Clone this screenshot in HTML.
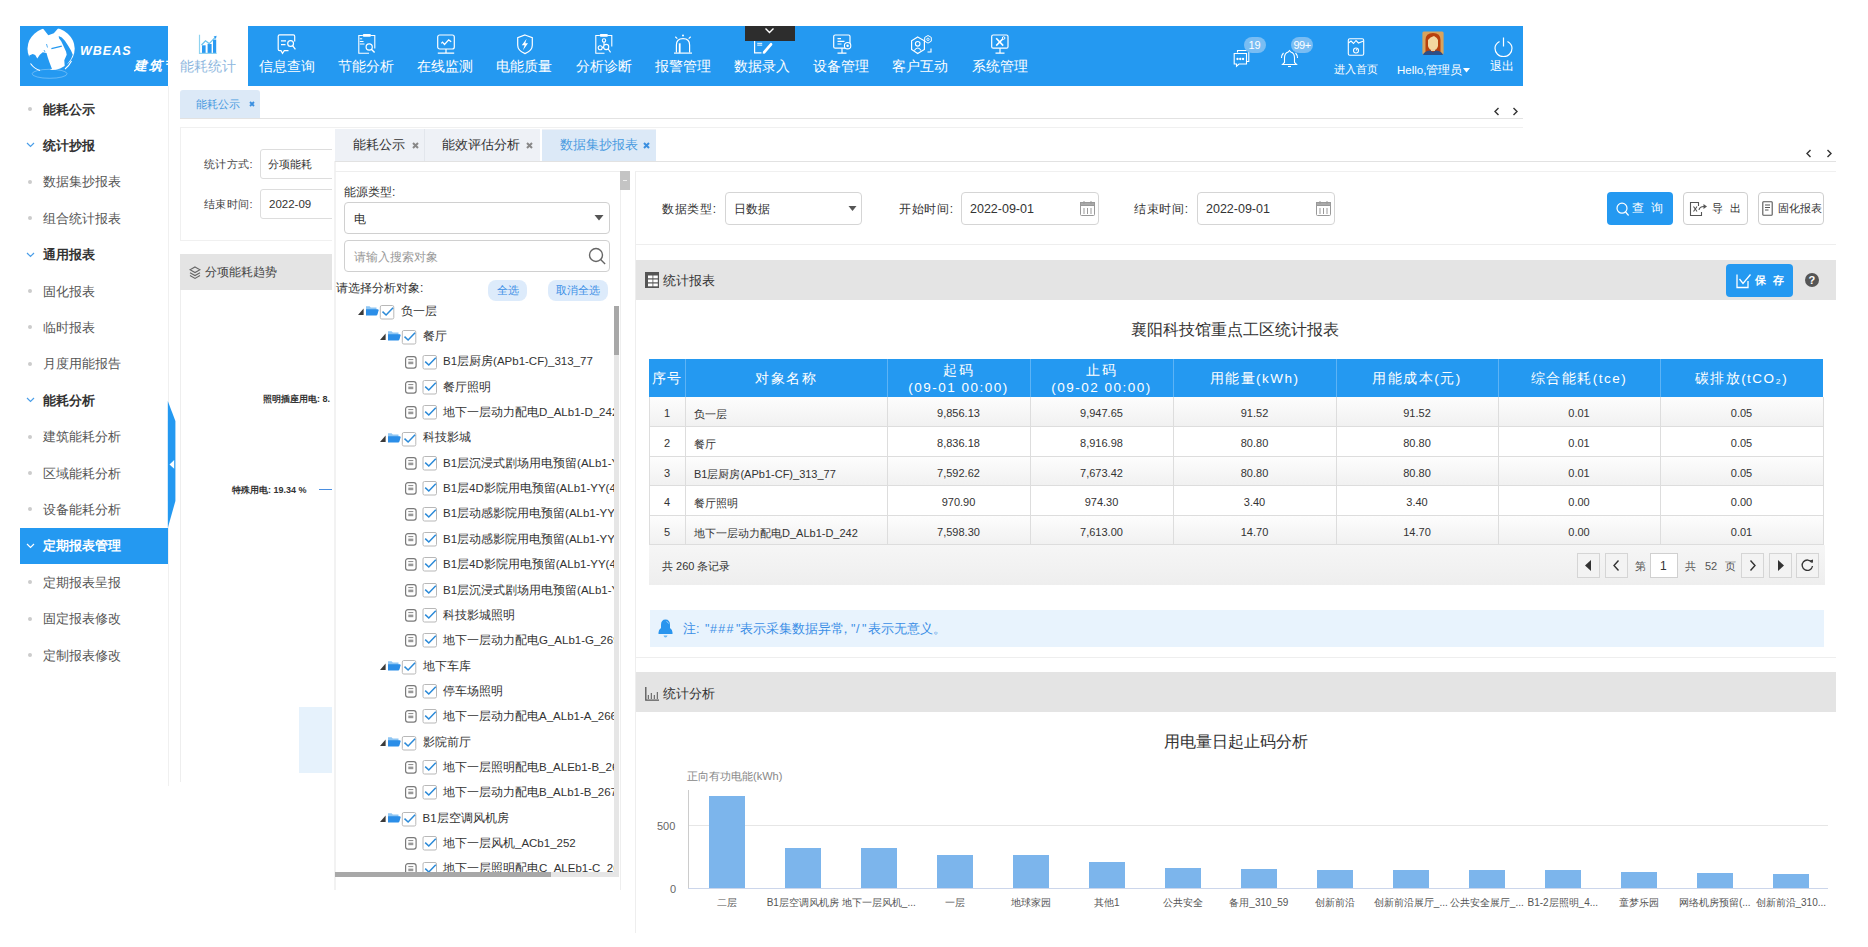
<!DOCTYPE html><html><head><meta charset="utf-8"><style>
*{margin:0;padding:0;box-sizing:border-box}
html,body{width:1868px;height:947px;overflow:hidden;background:#fff;font-family:"Liberation Sans",sans-serif;color:#333}
.ab{position:absolute}
.t{position:absolute;white-space:nowrap;line-height:1}
</style></head><body>

<div class="ab" style="left:20px;top:26px;width:1503px;height:60px;background:#2499f1"></div>
<div class="ab" style="left:168px;top:26px;width:80px;height:60px;background:#fff"></div>
<svg class="ab" style="left:22px;top:26px" width="60" height="58" viewBox="0 0 60 58">
<ellipse cx="29.1" cy="22.75" rx="23.6" ry="21.25" fill="#fff"/>
<path d="M20.2 1.6 L26.3 9.2 L31.8 7.3 L36.7 1.8 Q28 0 20.2 1.6Z" fill="#2499f1"/>
<path d="M36.7 10.1 L39.8 11.6 L42.9 14.7 L46.5 20.2 L49 24.5 L50.8 28.8 L49 33 L45.3 38 L42.9 42.9 L42.3 34.3 L44.7 28.8 L44.1 25.7 L41.6 20.2 L39.2 15.3 L37 12.2Z" fill="#2499f1"/>
<path d="M7.3 29.4 L10.7 27.9 L13.2 29.1 L15.3 32.5 L17.8 28.8 L20.8 26.3 L24.5 26.9 L25.7 31.2 L27.6 36.7 L30 42.9 L24.5 45.3 L18.4 44.7 L12.9 42.9 L9.2 39.2 L6.7 34.3Z" fill="#2499f1"/>
<path d="M29.4 22.7 L39.8 20.2" stroke="#2499f1" stroke-width="1.2"/>
<path d="M24.5 18 L25.5 21.5 M22 24 L23 26" stroke="#2499f1" stroke-width="0.8"/>
<path d="M8.5 37.5 Q12 42.5 18 44.6" stroke="#fff" stroke-width="1.1" fill="none"/>
<path d="M49.5 35 Q47 40 43 43" stroke="#fff" stroke-width="1.1" fill="none"/>
<ellipse cx="27.6" cy="47.8" rx="17.5" ry="4.5" fill="none" stroke="#fff" stroke-width="1" opacity=".3"/>
</svg>
<div class="t" style="left:80px;top:44.5px;font-size:12.5px;font-weight:bold;font-style:italic;color:#fff;letter-spacing:1px">WBEAS</div>
<div class="t" style="left:134px;top:59px;font-size:13px;font-weight:bold;font-style:italic;color:#fff;width:34.5px;overflow:hidden;letter-spacing:2px">建筑节</div>
<div class="t" style="left:179.5px;top:59px;width:56px;text-align:center;font-size:14px;color:#8fb8e0">能耗统计</div>
<svg class="ab" style="left:198.0px;top:34px" width="22" height="21" viewBox="0 0 22 21"><path d="M1.5 0.7V19.4H18.7" stroke="#8fd3f0" stroke-width="1.2" fill="none"/><rect x="4" y="11.3" width="3.6" height="7.6" fill="#2a9af2"/><rect x="9.6" y="10" width="4" height="8.9" fill="#2a9af2"/><rect x="15" y="5.6" width="3.2" height="13.3" fill="#2a9af2"/><path d="M3.5 11 L7.5 6.8 L11.2 9.6 L17.2 3.4" stroke="#6cc3ee" stroke-width="1.3" fill="none"/><path d="M18.6 1.8 L15.6 2.6 L17.9 4.9Z" fill="#2a9af2"/></svg>
<div class="t" style="left:258.7px;top:59px;width:56px;text-align:center;font-size:14px;color:#fff">信息查询</div>
<svg class="ab" style="left:277.2px;top:34px" width="22" height="21" viewBox="0 0 22 21"><path d="M12.5 0.9H2.6Q1.2 0.9 1.2 2.3V15.3Q1.2 16.7 2.6 16.7H4L5.5 19.3L7.3 16.7H11.5M17.7 7.6V2.3Q17.7 0.9 16.3 0.9H12" stroke="#fff" stroke-width="1.2" fill="none"/><path d="M4 6.8H9M4 10.7H8.5" stroke="#fff" stroke-width="1.3"/><circle cx="13.6" cy="9.5" r="2.9" stroke="#fff" stroke-width="1.2" fill="none"/><path d="M15.6 11.7L18.4 15.4" stroke="#fff" stroke-width="1.3"/></svg>
<div class="t" style="left:337.9px;top:59px;width:56px;text-align:center;font-size:14px;color:#fff">节能分析</div>
<svg class="ab" style="left:356.5px;top:34px" width="22" height="21" viewBox="0 0 22 21"><path d="M5.8 1.5H1.8V19.2H12M17.8 14.5V1.5H14" stroke="#fff" stroke-width="1.1" fill="none"/><rect x="5.7" y="0.1" width="8.3" height="2.6" rx="1.3" fill="#fff"/><path d="M2.8 4.8H5.2M2.8 7.5H6.5M2.8 10H7.5" stroke="#fff" stroke-width="1"/><circle cx="12.2" cy="13" r="3.1" stroke="#fff" stroke-width="1.2" fill="none"/><path d="M14.4 15.3L17.6 18.6" stroke="#fff" stroke-width="1.4"/></svg>
<div class="t" style="left:417.1px;top:59px;width:56px;text-align:center;font-size:14px;color:#fff">在线监测</div>
<svg class="ab" style="left:435.7px;top:34px" width="22" height="21" viewBox="0 0 22 21"><rect x="1.7" y="1" width="16.6" height="14" rx="2" stroke="#fff" stroke-width="1.2" fill="none"/><path d="M10 15V18.6M1.8 19.2H18.2" stroke="#fff" stroke-width="1.2"/><path d="M5.3 9.4L6.5 8.2L8.5 10.5L12.7 5.9L15.2 7.8" stroke="#fff" stroke-width="1.2" fill="none"/></svg>
<div class="t" style="left:496.3px;top:59px;width:56px;text-align:center;font-size:14px;color:#fff">电能质量</div>
<svg class="ab" style="left:515.0px;top:34px" width="22" height="21" viewBox="0 0 22 21"><path d="M10 1L17.3 3.6V11.2Q17.3 16.6 10 19.6Q2.7 16.6 2.7 11.2V3.6Z" stroke="#fff" stroke-width="1.2" fill="none"/><path d="M11.6 4.8L6.8 11.2H9.6L8 16.2L13 9.2H10.3Z" fill="#fff"/></svg>
<div class="t" style="left:575.5px;top:59px;width:56px;text-align:center;font-size:14px;color:#fff">分析诊断</div>
<svg class="ab" style="left:594.2px;top:34px" width="22" height="21" viewBox="0 0 22 21"><path d="M5.8 1.5H1.8V19.2H10.5M17.8 12.5V1.5H14" stroke="#fff" stroke-width="1.1" fill="none"/><rect x="5.7" y="0.1" width="8.3" height="2.6" rx="1.3" fill="#fff"/><circle cx="10" cy="6.4" r="1.7" stroke="#fff" stroke-width="1.1" fill="none"/><circle cx="6.2" cy="13.8" r="2" stroke="#fff" stroke-width="1.1" fill="none"/><circle cx="12.2" cy="13" r="2.6" stroke="#fff" stroke-width="1.1" fill="none"/><path d="M10 8.1V11M8 13.4H9.6M14.2 15L16.6 18.4" stroke="#fff" stroke-width="1.1"/></svg>
<div class="t" style="left:654.7px;top:59px;width:56px;text-align:center;font-size:14px;color:#fff">报警管理</div>
<svg class="ab" style="left:673.4px;top:34px" width="22" height="21" viewBox="0 0 22 21"><path d="M3.4 18.5V11Q3.4 4.6 10 4.6Q16.6 4.6 16.6 11V18.5" stroke="#fff" stroke-width="1.2" fill="none"/><path d="M1 19.1H19" stroke="#fff" stroke-width="1.2"/><rect x="5.8" y="9.3" width="1.8" height="9.5" fill="#fff"/><circle cx="10" cy="1.4" r="1" fill="#fff"/><path d="M2.3 2.8L4.3 4.6M17.7 2.8L15.7 4.6" stroke="#fff" stroke-width="1.2"/></svg>
<div class="t" style="left:733.9px;top:59px;width:56px;text-align:center;font-size:14px;color:#fff">数据录入</div>
<svg class="ab" style="left:752.7px;top:34px" width="22" height="21" viewBox="0 0 22 21"><path d="M1.6 5V18.9H8.5" stroke="#fff" stroke-width="1.2" fill="none"/><rect x="4.2" y="8.8" width="5" height="1.3" fill="#cde8fb"/><rect x="4.2" y="10.6" width="5" height="1.2" fill="#cde8fb"/><path d="M11.3 18.2L18 10.3" stroke="#fff" stroke-width="2.8" stroke-linecap="round"/><path d="M10 19.5L11.2 17.5" stroke="#fff" stroke-width="1.2"/></svg>
<div class="t" style="left:813.1px;top:59px;width:56px;text-align:center;font-size:14px;color:#fff">设备管理</div>
<svg class="ab" style="left:831.9px;top:34px" width="22" height="21" viewBox="0 0 22 21"><rect x="1.7" y="1" width="16.3" height="13.2" rx="1.5" stroke="#fff" stroke-width="1.2" fill="none"/><path d="M10 14.2V18.4M5.5 19.2H14.5" stroke="#fff" stroke-width="1.2"/><path d="M5.5 4.7H9M5.5 7.4H12.5M5.5 10H9.5" stroke="#fff" stroke-width="1.2"/><circle cx="15.6" cy="11.7" r="3.2" fill="#2499f1" stroke="#fff" stroke-width="1.1"/><circle cx="15.6" cy="11.7" r="1.2" fill="#fff"/></svg>
<div class="t" style="left:892.3px;top:59px;width:56px;text-align:center;font-size:14px;color:#fff">客户互动</div>
<svg class="ab" style="left:911.2px;top:34px" width="22" height="21" viewBox="0 0 22 21"><path d="M6.7 3L13.4 6.8V15.5L6.7 19.5L0.6 15.5V6.8Z" stroke="#fff" stroke-width="1.2" fill="none"/><circle cx="6.7" cy="9.8" r="2.3" stroke="#fff" stroke-width="1.1" fill="none"/><path d="M3.3 16.5Q6.7 11.5 10.1 16.5" stroke="#fff" stroke-width="1.1" fill="none"/><path d="M17 1.5L20.3 3.4V7.2L17 9.1L13.7 7.2V3.4Z" stroke="#fff" stroke-width="1" fill="none"/><circle cx="17" cy="5.3" r="1.2" stroke="#fff" stroke-width=".9" fill="none"/><path d="M20 14.5V18H16.5" stroke="#fff" stroke-width="1.1" fill="none"/></svg>
<div class="t" style="left:971.5px;top:59px;width:56px;text-align:center;font-size:14px;color:#fff">系统管理</div>
<svg class="ab" style="left:990.4px;top:34px" width="22" height="21" viewBox="0 0 22 21"><rect x="1.7" y="1" width="16.3" height="13.2" rx="1.5" stroke="#fff" stroke-width="1.2" fill="none"/><path d="M10 14.2V18.4M5.5 19.2H14.5" stroke="#fff" stroke-width="1.2"/><path d="M6.2 4.3L13.2 11.6M13.4 4.3L6.2 11.6" stroke="#fff" stroke-width="1.6"/><circle cx="13.6" cy="4" r="1.3" fill="#2a9af2" stroke="#fff"/></svg>
<div class="ab" style="left:744.8px;top:26px;width:50px;height:15px;background:#2d2d2d"></div>
<svg class="ab" style="left:764px;top:27px" width="11" height="8" viewBox="0 0 11 8"><path d="M1.5 1.5l4 4 4-4" fill="none" stroke="#fff" stroke-width="1.4"/></svg>
<svg class="ab" style="left:1233px;top:49px" width="18" height="19" viewBox="0 0 18 19" fill="none" stroke="#fff" stroke-width="1.1"><path d="M4.5 3.5V1.5H15.8V12.5H14"/><path d="M2 4.5H13.5V15H6L3.5 17.2V15H1.2V4.5Z"/><circle cx="4.5" cy="10" r=".6" fill="#fff"/><circle cx="7.3" cy="10" r=".6" fill="#fff"/><circle cx="10.1" cy="10" r=".6" fill="#fff"/></svg>
<div class="ab" style="left:1243.5px;top:37px;width:22px;height:16px;border-radius:8px;background:#79bdf3"></div>
<div class="t" style="left:1243.5px;top:39.5px;width:22px;text-align:center;font-size:11px;color:#fff">19</div>
<svg class="ab" style="left:1280px;top:49px" width="19" height="19" viewBox="0 0 19 19" fill="none" stroke="#fff" stroke-width="1.1"><path d="M9.5 1.5L10.8 3Q14.5 4 14.5 9V13.5L16.5 15.5H2.5L4.5 13.5V9Q4.5 4 8.2 3Z"/><path d="M8 17.5H11"/><path d="M1.5 9Q1.5 6 3.5 4M17.5 9Q17.5 6 15.5 4"/></svg>
<div class="ab" style="left:1291px;top:37px;width:22px;height:16px;border-radius:8px;background:#79bdf3"></div>
<div class="t" style="left:1290px;top:39.5px;width:24px;text-align:center;font-size:11px;color:#fff;letter-spacing:-.5px">99+</div>
<svg class="ab" style="left:1347px;top:38px" width="18" height="18" viewBox="0 0 18 18" fill="none" stroke="#fff" stroke-width="1.1"><rect x="1.3" y="0.8" width="15.4" height="16.4" rx="1.5"/><path d="M1.5 5L4 3L6.5 5.5L9 2.5L11.5 5L16.5 3"/><circle cx="9" cy="12.5" r="2.5"/><path d="M9 12.5L10 11"/></svg>
<div class="t" style="left:1334px;top:63.5px;font-size:11px;color:#fff">进入首页</div>
<div class="t" style="left:1397px;top:64.5px;font-size:11.5px;color:#fff">Hello,管理员</div>
<svg class="ab" style="left:1463px;top:68px" width="7" height="5" viewBox="0 0 7 5"><path d="M0 0H7L3.5 4.5Z" fill="#fff"/></svg>
<svg class="ab" style="left:1422px;top:31px" width="22" height="24" viewBox="0 0 22 24"><rect x="0.4" y="0.5" width="21.2" height="23" rx="1.5" fill="#d9a35c"/><path d="M3.5 22V9Q3.5 2 11 2Q18.5 2 18.5 9V22Z" fill="#b8400e"/><path d="M6 9Q8 6 12 5Q15.5 7 16 9V15Q15 19 11 19.5Q7 19 6 15Z" fill="#f4d7a0"/><path d="M9 18H13V20H9Z" fill="#efd0a0"/><path d="M1 24Q2 20 8 19.5L11 21L14 19.5Q20 20 21 24Z" fill="#2d4e86"/></svg>
<svg class="ab" style="left:1494px;top:37px" width="19" height="20" viewBox="0 0 19 20" fill="none" stroke="#fff" stroke-width="1.2"><path d="M5.5 4.5Q1 7 1 11.2A8.5 8.5 0 0 0 18 11.2Q18 7 13.5 4.5"/><path d="M9.5 0.5V9.5"/></svg>
<div class="t" style="left:1490px;top:59.5px;font-size:12px;color:#fff">退出</div>
<div class="ab" style="left:168px;top:86px;width:1px;height:700px;background:#f0f0f0"></div>
<div class="t" style="left:43px;top:102.5px;font-size:13px;font-weight:bold;color:#333">能耗公示</div>
<div class="ab" style="left:28px;top:107.0px;width:4px;height:4px;border-radius:50%;background:#ccc"></div>
<div class="t" style="left:43px;top:138.9px;font-size:13px;font-weight:bold;color:#333">统计抄报</div>
<svg class="ab" style="left:25.5px;top:142.4px" width="9" height="6" viewBox="0 0 9 6"><path d="M1 1l3.5 3.5L8 1" fill="none" stroke="#4a9ee8" stroke-width="1.2"/></svg>
<div class="t" style="left:43px;top:175.3px;font-size:13px;color:#555">数据集抄报表</div>
<div class="ab" style="left:28px;top:179.8px;width:4px;height:4px;border-radius:50%;background:#ccc"></div>
<div class="t" style="left:43px;top:211.7px;font-size:13px;color:#555">组合统计报表</div>
<div class="ab" style="left:28px;top:216.2px;width:4px;height:4px;border-radius:50%;background:#ccc"></div>
<div class="t" style="left:43px;top:248.1px;font-size:13px;font-weight:bold;color:#333">通用报表</div>
<svg class="ab" style="left:25.5px;top:251.6px" width="9" height="6" viewBox="0 0 9 6"><path d="M1 1l3.5 3.5L8 1" fill="none" stroke="#4a9ee8" stroke-width="1.2"/></svg>
<div class="t" style="left:43px;top:284.5px;font-size:13px;color:#555">固化报表</div>
<div class="ab" style="left:28px;top:289.0px;width:4px;height:4px;border-radius:50%;background:#ccc"></div>
<div class="t" style="left:43px;top:320.9px;font-size:13px;color:#555">临时报表</div>
<div class="ab" style="left:28px;top:325.4px;width:4px;height:4px;border-radius:50%;background:#ccc"></div>
<div class="t" style="left:43px;top:357.3px;font-size:13px;color:#555">月度用能报告</div>
<div class="ab" style="left:28px;top:361.8px;width:4px;height:4px;border-radius:50%;background:#ccc"></div>
<div class="t" style="left:43px;top:393.7px;font-size:13px;font-weight:bold;color:#333">能耗分析</div>
<svg class="ab" style="left:25.5px;top:397.2px" width="9" height="6" viewBox="0 0 9 6"><path d="M1 1l3.5 3.5L8 1" fill="none" stroke="#4a9ee8" stroke-width="1.2"/></svg>
<div class="t" style="left:43px;top:430.1px;font-size:13px;color:#555">建筑能耗分析</div>
<div class="ab" style="left:28px;top:434.6px;width:4px;height:4px;border-radius:50%;background:#ccc"></div>
<div class="t" style="left:43px;top:466.5px;font-size:13px;color:#555">区域能耗分析</div>
<div class="ab" style="left:28px;top:471.0px;width:4px;height:4px;border-radius:50%;background:#ccc"></div>
<div class="t" style="left:43px;top:502.9px;font-size:13px;color:#555">设备能耗分析</div>
<div class="ab" style="left:28px;top:507.4px;width:4px;height:4px;border-radius:50%;background:#ccc"></div>
<div class="ab" style="left:20px;top:527.5px;width:148px;height:36px;background:#2499f1"></div>
<div class="t" style="left:43px;top:539.3px;font-size:13px;font-weight:bold;color:#fff">定期报表管理</div>
<svg class="ab" style="left:25.5px;top:542.8px" width="9" height="6" viewBox="0 0 9 6"><path d="M1 1l3.5 3.5L8 1" fill="none" stroke="#fff" stroke-width="1.2"/></svg>
<div class="t" style="left:43px;top:575.7px;font-size:13px;color:#555">定期报表呈报</div>
<div class="ab" style="left:28px;top:580.2px;width:4px;height:4px;border-radius:50%;background:#ccc"></div>
<div class="t" style="left:43px;top:612.1px;font-size:13px;color:#555">固定报表修改</div>
<div class="ab" style="left:28px;top:616.6px;width:4px;height:4px;border-radius:50%;background:#ccc"></div>
<div class="t" style="left:43px;top:648.5px;font-size:13px;color:#555">定制报表修改</div>
<div class="ab" style="left:28px;top:653.0px;width:4px;height:4px;border-radius:50%;background:#ccc"></div>
<svg class="ab" style="left:167px;top:400px" width="10" height="130" viewBox="0 0 10 130"><path d="M0.8 1 L8.4 21 L8.4 101 L0.8 128Z" fill="#2499f1"/><path d="M7.2 60 L2.5 64.4 L7.2 68.8Z" fill="#fff"/></svg>
<div class="ab" style="left:180px;top:90px;width:80px;height:28px;background:#dce9f7;border-radius:3px 3px 0 0"></div>
<div class="t" style="left:196px;top:98.5px;font-size:11px;color:#4a9be0">能耗公示</div>
<svg class="ab" style="left:248.5px;top:100.5px" width="6" height="6" viewBox="0 0 6 6"><path d="M1 1L5 5M5 1L1 5" stroke="#3b8fe0" stroke-width="1.8"/></svg>
<div class="ab" style="left:180px;top:118px;width:1343px;height:1px;background:#e2e2e2"></div>
<svg class="ab" style="left:1493px;top:106px" width="8" height="11" viewBox="0 0 8 11"><path d="M5.5 2L2 5.5L5.5 9" fill="none" stroke="#333" stroke-width="1.4"/></svg>
<svg class="ab" style="left:1511px;top:106px" width="8" height="11" viewBox="0 0 8 11"><path d="M2.5 2L6 5.5L2.5 9" fill="none" stroke="#333" stroke-width="1.4"/></svg>
<div class="ab" style="left:180px;top:127px;width:1343px;height:114px;border:1px solid #f0f0f0;border-right:none"></div>
<div class="t" style="left:204px;top:159px;font-size:11px;color:#444;letter-spacing:.4px">统计方式:</div>
<div class="ab" style="left:260px;top:149px;width:90px;height:30px;border:1px solid #ddd;border-radius:3px;background:#fff"></div>
<div class="t" style="left:268px;top:159px;font-size:11px;color:#333">分项能耗</div>
<div class="t" style="left:204px;top:199px;font-size:11px;color:#444;letter-spacing:.4px">结束时间:</div>
<div class="ab" style="left:260px;top:189px;width:90px;height:30px;border:1px solid #ddd;border-radius:3px;background:#fff"></div>
<div class="t" style="left:269px;top:199px;font-size:11.5px;color:#333">2022-09</div>
<div class="ab" style="left:180px;top:254px;width:160px;height:36px;background:#e4e4e4"></div>
<svg class="ab" style="left:189px;top:265.5px" width="12" height="14" viewBox="0 0 12 14" fill="none" stroke="#666" stroke-width="1.1"><path d="M6 1L11 3.8L6 6.6L1 3.8Z"/><path d="M1 6.8L6 9.6L11 6.8M1 9.6L6 12.4L11 9.6"/></svg>
<div class="t" style="left:205px;top:266px;font-size:12px;color:#444">分项能耗趋势</div>
<div class="ab" style="left:180px;top:290px;width:1px;height:492px;background:#eee"></div>
<div class="t" style="left:263px;top:395px;font-size:9px;font-weight:bold;color:#333">照明插座用电: 8.</div>
<div class="t" style="left:232px;top:486px;font-size:9px;font-weight:bold;color:#333">特殊用电: 19.34 %</div>
<div class="ab" style="left:319px;top:489px;width:14px;height:1px;background:#4a8ee0"></div>
<div class="ab" style="left:299px;top:707px;width:33px;height:66px;background:#e6f2fc"></div>
<div class="ab" style="left:332px;top:128.5px;width:1504px;height:805px;background:#fff"></div>
<div class="ab" style="left:334px;top:161px;width:1.5px;height:729px;background:#f2f2f2"></div>
<div class="ab" style="left:335px;top:129px;width:321px;height:32px;background:#eef1f6"></div>
<div class="ab" style="left:542px;top:130px;width:114px;height:31px;background:#dce9f7"></div>
<div class="ab" style="left:423.5px;top:129px;width:1px;height:32px;background:#e2e6ec"></div>
<div class="ab" style="left:540px;top:129px;width:2px;height:32px;background:#fff"></div>
<div class="ab" style="left:335px;top:160.5px;width:1501px;height:1px;background:#e2e2e2"></div>
<div class="t" style="left:353px;top:139px;font-size:12.5px;color:#333">能耗公示</div>
<svg class="ab" style="left:411.5px;top:142px" width="7" height="7" viewBox="0 0 7 7"><path d="M1 1L6 6M6 1L1 6" stroke="#888" stroke-width="2"/></svg>
<div class="t" style="left:442px;top:139px;font-size:12.5px;color:#333">能效评估分析</div>
<svg class="ab" style="left:525.5px;top:142px" width="7" height="7" viewBox="0 0 7 7"><path d="M1 1L6 6M6 1L1 6" stroke="#888" stroke-width="2"/></svg>
<div class="t" style="left:560px;top:139px;font-size:12.5px;color:#4a9be0">数据集抄报表</div>
<svg class="ab" style="left:642.5px;top:142px" width="7" height="7" viewBox="0 0 7 7"><path d="M1 1L6 6M6 1L1 6" stroke="#3b8fe0" stroke-width="2"/></svg>
<svg class="ab" style="left:1805px;top:148px" width="8" height="11" viewBox="0 0 8 11"><path d="M5.5 2L2 5.5L5.5 9" fill="none" stroke="#333" stroke-width="1.4"/></svg>
<svg class="ab" style="left:1825px;top:148px" width="8" height="11" viewBox="0 0 8 11"><path d="M2.5 2L6 5.5L2.5 9" fill="none" stroke="#333" stroke-width="1.4"/></svg>
<div class="ab" style="left:335px;top:171px;width:285px;height:1px;background:#eee"></div>
<div class="ab" style="left:620px;top:171px;width:10px;height:19px;background:#c4c4c4"></div>
<div class="ab" style="left:623px;top:180px;width:4px;height:1px;background:#eee"></div>
<div class="ab" style="left:620px;top:190px;width:1px;height:700px;background:#eee"></div>
<div class="t" style="left:344px;top:185.5px;font-size:12px;color:#333">能源类型:</div>
<div class="ab" style="left:344px;top:202px;width:266px;height:32px;border:1px solid #d0d0d0;border-radius:4px"></div>
<div class="t" style="left:354px;top:212.5px;font-size:12px;color:#333">电</div>
<svg class="ab" style="left:593.5px;top:215px" width="10" height="6" viewBox="0 0 10 6"><path d="M0.5 0h9L5 5.5z" fill="#555"/></svg>
<div class="ab" style="left:344px;top:240px;width:266px;height:32px;border:1px solid #d0d0d0;border-radius:4px"></div>
<div class="t" style="left:354px;top:250.5px;font-size:12px;color:#999">请输入搜索对象</div>
<svg class="ab" style="left:588px;top:247px" width="19" height="19" viewBox="0 0 19 19"><circle cx="8" cy="8" r="6.5" fill="none" stroke="#666" stroke-width="1.4"/><path d="M12.6 12.6l4.5 4.5" stroke="#666" stroke-width="1.4"/></svg>
<div class="t" style="left:336px;top:282px;font-size:12px;color:#333">请选择分析对象:</div>
<div class="ab" style="left:488px;top:280px;width:39px;height:21px;background:#ddebfb;border-radius:8px"></div>
<div class="t" style="left:497px;top:284.5px;font-size:11px;color:#3a8ee6">全选</div>
<div class="ab" style="left:548px;top:280px;width:60px;height:21px;background:#ddebfb;border-radius:8px"></div>
<div class="t" style="left:556px;top:284.5px;font-size:11px;color:#3a8ee6">取消全选</div>
<div class="ab" style="left:335px;top:300px;width:279px;height:572px;overflow:hidden">
<svg class="ab" style="left:23.2px;top:4.8px" width="40" height="15" viewBox="0 0 40 15"><path d="M0 10 L5.6 10 L5.6 3.4Z" fill="#3a3a3a"/><path d="M8 1.2H11.5L12.8 2.5H18.5V5H8Z" fill="#8fc6f3"/><path d="M8 4.2H19.5Q20.8 4.2 20.6 5.4L19.4 9.6Q19.1 10.5 18.2 10.5H8Z" fill="#2b8ee8"/><rect x="22.3" y="0.5" width="13.5" height="13.5" rx="1.5" fill="#fff" stroke="#b8b8b8"/><path d="M24.5 6.6l3.6 3.4 7-7.2" fill="none" stroke="#2b8ad8" stroke-width="1.5"/></svg>
<div class="t" style="left:66.0px;top:5.6px;font-size:11.5px;color:#333">负一层</div>
<svg class="ab" style="left:44.7px;top:30.2px" width="40" height="15" viewBox="0 0 40 15"><path d="M0 10 L5.6 10 L5.6 3.4Z" fill="#3a3a3a"/><path d="M8 1.2H11.5L12.8 2.5H18.5V5H8Z" fill="#8fc6f3"/><path d="M8 4.2H19.5Q20.8 4.2 20.6 5.4L19.4 9.6Q19.1 10.5 18.2 10.5H8Z" fill="#2b8ee8"/><rect x="22.3" y="0.5" width="13.5" height="13.5" rx="1.5" fill="#fff" stroke="#b8b8b8"/><path d="M24.5 6.6l3.6 3.4 7-7.2" fill="none" stroke="#2b8ad8" stroke-width="1.5"/></svg>
<div class="t" style="left:87.5px;top:31.0px;font-size:11.5px;color:#333">餐厅</div>
<svg class="ab" style="left:70.0px;top:54.5px" width="34" height="15" viewBox="0 0 34 15"><rect x="0.6" y="1.6" width="10.5" height="11.5" rx="2.4" fill="none" stroke="#7a7a7a" stroke-width="1.2"/><path d="M3.3 4.6h5" stroke="#888" stroke-width="1"/><rect x="3.3" y="6.6" width="5" height="2.6" fill="#999"/><rect x="18" y="0.5" width="13.5" height="13.5" rx="1.5" fill="#fff" stroke="#b8b8b8"/><path d="M20.2 6.6l3.6 3.4 7-7.2" fill="none" stroke="#2b8ad8" stroke-width="1.5"/></svg>
<div class="t" style="left:108px;top:56.3px;font-size:11.5px;color:#333">B1层厨房(APb1-CF)_313_77</div>
<svg class="ab" style="left:70.0px;top:79.9px" width="34" height="15" viewBox="0 0 34 15"><rect x="0.6" y="1.6" width="10.5" height="11.5" rx="2.4" fill="none" stroke="#7a7a7a" stroke-width="1.2"/><path d="M3.3 4.6h5" stroke="#888" stroke-width="1"/><rect x="3.3" y="6.6" width="5" height="2.6" fill="#999"/><rect x="18" y="0.5" width="13.5" height="13.5" rx="1.5" fill="#fff" stroke="#b8b8b8"/><path d="M20.2 6.6l3.6 3.4 7-7.2" fill="none" stroke="#2b8ad8" stroke-width="1.5"/></svg>
<div class="t" style="left:108px;top:81.7px;font-size:11.5px;color:#333">餐厅照明</div>
<svg class="ab" style="left:70.0px;top:105.2px" width="34" height="15" viewBox="0 0 34 15"><rect x="0.6" y="1.6" width="10.5" height="11.5" rx="2.4" fill="none" stroke="#7a7a7a" stroke-width="1.2"/><path d="M3.3 4.6h5" stroke="#888" stroke-width="1"/><rect x="3.3" y="6.6" width="5" height="2.6" fill="#999"/><rect x="18" y="0.5" width="13.5" height="13.5" rx="1.5" fill="#fff" stroke="#b8b8b8"/><path d="M20.2 6.6l3.6 3.4 7-7.2" fill="none" stroke="#2b8ad8" stroke-width="1.5"/></svg>
<div class="t" style="left:108px;top:107.0px;font-size:11.5px;color:#333">地下一层动力配电D_ALb1-D_242</div>
<svg class="ab" style="left:44.7px;top:131.6px" width="40" height="15" viewBox="0 0 40 15"><path d="M0 10 L5.6 10 L5.6 3.4Z" fill="#3a3a3a"/><path d="M8 1.2H11.5L12.8 2.5H18.5V5H8Z" fill="#8fc6f3"/><path d="M8 4.2H19.5Q20.8 4.2 20.6 5.4L19.4 9.6Q19.1 10.5 18.2 10.5H8Z" fill="#2b8ee8"/><rect x="22.3" y="0.5" width="13.5" height="13.5" rx="1.5" fill="#fff" stroke="#b8b8b8"/><path d="M24.5 6.6l3.6 3.4 7-7.2" fill="none" stroke="#2b8ad8" stroke-width="1.5"/></svg>
<div class="t" style="left:87.5px;top:132.4px;font-size:11.5px;color:#333">科技影城</div>
<svg class="ab" style="left:70.0px;top:155.9px" width="34" height="15" viewBox="0 0 34 15"><rect x="0.6" y="1.6" width="10.5" height="11.5" rx="2.4" fill="none" stroke="#7a7a7a" stroke-width="1.2"/><path d="M3.3 4.6h5" stroke="#888" stroke-width="1"/><rect x="3.3" y="6.6" width="5" height="2.6" fill="#999"/><rect x="18" y="0.5" width="13.5" height="13.5" rx="1.5" fill="#fff" stroke="#b8b8b8"/><path d="M20.2 6.6l3.6 3.4 7-7.2" fill="none" stroke="#2b8ad8" stroke-width="1.5"/></svg>
<div class="t" style="left:108px;top:157.7px;font-size:11.5px;color:#333">B1层沉浸式剧场用电预留(ALb1-YY</div>
<svg class="ab" style="left:70.0px;top:181.3px" width="34" height="15" viewBox="0 0 34 15"><rect x="0.6" y="1.6" width="10.5" height="11.5" rx="2.4" fill="none" stroke="#7a7a7a" stroke-width="1.2"/><path d="M3.3 4.6h5" stroke="#888" stroke-width="1"/><rect x="3.3" y="6.6" width="5" height="2.6" fill="#999"/><rect x="18" y="0.5" width="13.5" height="13.5" rx="1.5" fill="#fff" stroke="#b8b8b8"/><path d="M20.2 6.6l3.6 3.4 7-7.2" fill="none" stroke="#2b8ad8" stroke-width="1.5"/></svg>
<div class="t" style="left:108px;top:183.1px;font-size:11.5px;color:#333">B1层4D影院用电预留(ALb1-YY(4</div>
<svg class="ab" style="left:70.0px;top:206.6px" width="34" height="15" viewBox="0 0 34 15"><rect x="0.6" y="1.6" width="10.5" height="11.5" rx="2.4" fill="none" stroke="#7a7a7a" stroke-width="1.2"/><path d="M3.3 4.6h5" stroke="#888" stroke-width="1"/><rect x="3.3" y="6.6" width="5" height="2.6" fill="#999"/><rect x="18" y="0.5" width="13.5" height="13.5" rx="1.5" fill="#fff" stroke="#b8b8b8"/><path d="M20.2 6.6l3.6 3.4 7-7.2" fill="none" stroke="#2b8ad8" stroke-width="1.5"/></svg>
<div class="t" style="left:108px;top:208.4px;font-size:11.5px;color:#333">B1层动感影院用电预留(ALb1-YY(</div>
<svg class="ab" style="left:70.0px;top:231.9px" width="34" height="15" viewBox="0 0 34 15"><rect x="0.6" y="1.6" width="10.5" height="11.5" rx="2.4" fill="none" stroke="#7a7a7a" stroke-width="1.2"/><path d="M3.3 4.6h5" stroke="#888" stroke-width="1"/><rect x="3.3" y="6.6" width="5" height="2.6" fill="#999"/><rect x="18" y="0.5" width="13.5" height="13.5" rx="1.5" fill="#fff" stroke="#b8b8b8"/><path d="M20.2 6.6l3.6 3.4 7-7.2" fill="none" stroke="#2b8ad8" stroke-width="1.5"/></svg>
<div class="t" style="left:108px;top:233.8px;font-size:11.5px;color:#333">B1层动感影院用电预留(ALb1-YY(</div>
<svg class="ab" style="left:70.0px;top:257.3px" width="34" height="15" viewBox="0 0 34 15"><rect x="0.6" y="1.6" width="10.5" height="11.5" rx="2.4" fill="none" stroke="#7a7a7a" stroke-width="1.2"/><path d="M3.3 4.6h5" stroke="#888" stroke-width="1"/><rect x="3.3" y="6.6" width="5" height="2.6" fill="#999"/><rect x="18" y="0.5" width="13.5" height="13.5" rx="1.5" fill="#fff" stroke="#b8b8b8"/><path d="M20.2 6.6l3.6 3.4 7-7.2" fill="none" stroke="#2b8ad8" stroke-width="1.5"/></svg>
<div class="t" style="left:108px;top:259.1px;font-size:11.5px;color:#333">B1层4D影院用电预留(ALb1-YY(4</div>
<svg class="ab" style="left:70.0px;top:282.7px" width="34" height="15" viewBox="0 0 34 15"><rect x="0.6" y="1.6" width="10.5" height="11.5" rx="2.4" fill="none" stroke="#7a7a7a" stroke-width="1.2"/><path d="M3.3 4.6h5" stroke="#888" stroke-width="1"/><rect x="3.3" y="6.6" width="5" height="2.6" fill="#999"/><rect x="18" y="0.5" width="13.5" height="13.5" rx="1.5" fill="#fff" stroke="#b8b8b8"/><path d="M20.2 6.6l3.6 3.4 7-7.2" fill="none" stroke="#2b8ad8" stroke-width="1.5"/></svg>
<div class="t" style="left:108px;top:284.5px;font-size:11.5px;color:#333">B1层沉浸式剧场用电预留(ALb1-YY</div>
<svg class="ab" style="left:70.0px;top:308.0px" width="34" height="15" viewBox="0 0 34 15"><rect x="0.6" y="1.6" width="10.5" height="11.5" rx="2.4" fill="none" stroke="#7a7a7a" stroke-width="1.2"/><path d="M3.3 4.6h5" stroke="#888" stroke-width="1"/><rect x="3.3" y="6.6" width="5" height="2.6" fill="#999"/><rect x="18" y="0.5" width="13.5" height="13.5" rx="1.5" fill="#fff" stroke="#b8b8b8"/><path d="M20.2 6.6l3.6 3.4 7-7.2" fill="none" stroke="#2b8ad8" stroke-width="1.5"/></svg>
<div class="t" style="left:108px;top:309.8px;font-size:11.5px;color:#333">科技影城照明</div>
<svg class="ab" style="left:70.0px;top:333.4px" width="34" height="15" viewBox="0 0 34 15"><rect x="0.6" y="1.6" width="10.5" height="11.5" rx="2.4" fill="none" stroke="#7a7a7a" stroke-width="1.2"/><path d="M3.3 4.6h5" stroke="#888" stroke-width="1"/><rect x="3.3" y="6.6" width="5" height="2.6" fill="#999"/><rect x="18" y="0.5" width="13.5" height="13.5" rx="1.5" fill="#fff" stroke="#b8b8b8"/><path d="M20.2 6.6l3.6 3.4 7-7.2" fill="none" stroke="#2b8ad8" stroke-width="1.5"/></svg>
<div class="t" style="left:108px;top:335.2px;font-size:11.5px;color:#333">地下一层动力配电G_ALb1-G_269</div>
<svg class="ab" style="left:44.7px;top:359.7px" width="40" height="15" viewBox="0 0 40 15"><path d="M0 10 L5.6 10 L5.6 3.4Z" fill="#3a3a3a"/><path d="M8 1.2H11.5L12.8 2.5H18.5V5H8Z" fill="#8fc6f3"/><path d="M8 4.2H19.5Q20.8 4.2 20.6 5.4L19.4 9.6Q19.1 10.5 18.2 10.5H8Z" fill="#2b8ee8"/><rect x="22.3" y="0.5" width="13.5" height="13.5" rx="1.5" fill="#fff" stroke="#b8b8b8"/><path d="M24.5 6.6l3.6 3.4 7-7.2" fill="none" stroke="#2b8ad8" stroke-width="1.5"/></svg>
<div class="t" style="left:87.5px;top:360.5px;font-size:11.5px;color:#333">地下车库</div>
<svg class="ab" style="left:70.0px;top:384.1px" width="34" height="15" viewBox="0 0 34 15"><rect x="0.6" y="1.6" width="10.5" height="11.5" rx="2.4" fill="none" stroke="#7a7a7a" stroke-width="1.2"/><path d="M3.3 4.6h5" stroke="#888" stroke-width="1"/><rect x="3.3" y="6.6" width="5" height="2.6" fill="#999"/><rect x="18" y="0.5" width="13.5" height="13.5" rx="1.5" fill="#fff" stroke="#b8b8b8"/><path d="M20.2 6.6l3.6 3.4 7-7.2" fill="none" stroke="#2b8ad8" stroke-width="1.5"/></svg>
<div class="t" style="left:108px;top:385.9px;font-size:11.5px;color:#333">停车场照明</div>
<svg class="ab" style="left:70.0px;top:409.4px" width="34" height="15" viewBox="0 0 34 15"><rect x="0.6" y="1.6" width="10.5" height="11.5" rx="2.4" fill="none" stroke="#7a7a7a" stroke-width="1.2"/><path d="M3.3 4.6h5" stroke="#888" stroke-width="1"/><rect x="3.3" y="6.6" width="5" height="2.6" fill="#999"/><rect x="18" y="0.5" width="13.5" height="13.5" rx="1.5" fill="#fff" stroke="#b8b8b8"/><path d="M20.2 6.6l3.6 3.4 7-7.2" fill="none" stroke="#2b8ad8" stroke-width="1.5"/></svg>
<div class="t" style="left:108px;top:411.2px;font-size:11.5px;color:#333">地下一层动力配电A_ALb1-A_266</div>
<svg class="ab" style="left:44.7px;top:435.8px" width="40" height="15" viewBox="0 0 40 15"><path d="M0 10 L5.6 10 L5.6 3.4Z" fill="#3a3a3a"/><path d="M8 1.2H11.5L12.8 2.5H18.5V5H8Z" fill="#8fc6f3"/><path d="M8 4.2H19.5Q20.8 4.2 20.6 5.4L19.4 9.6Q19.1 10.5 18.2 10.5H8Z" fill="#2b8ee8"/><rect x="22.3" y="0.5" width="13.5" height="13.5" rx="1.5" fill="#fff" stroke="#b8b8b8"/><path d="M24.5 6.6l3.6 3.4 7-7.2" fill="none" stroke="#2b8ad8" stroke-width="1.5"/></svg>
<div class="t" style="left:87.5px;top:436.6px;font-size:11.5px;color:#333">影院前厅</div>
<svg class="ab" style="left:70.0px;top:460.1px" width="34" height="15" viewBox="0 0 34 15"><rect x="0.6" y="1.6" width="10.5" height="11.5" rx="2.4" fill="none" stroke="#7a7a7a" stroke-width="1.2"/><path d="M3.3 4.6h5" stroke="#888" stroke-width="1"/><rect x="3.3" y="6.6" width="5" height="2.6" fill="#999"/><rect x="18" y="0.5" width="13.5" height="13.5" rx="1.5" fill="#fff" stroke="#b8b8b8"/><path d="M20.2 6.6l3.6 3.4 7-7.2" fill="none" stroke="#2b8ad8" stroke-width="1.5"/></svg>
<div class="t" style="left:108px;top:461.9px;font-size:11.5px;color:#333">地下一层照明配电B_ALEb1-B_268</div>
<svg class="ab" style="left:70.0px;top:485.4px" width="34" height="15" viewBox="0 0 34 15"><rect x="0.6" y="1.6" width="10.5" height="11.5" rx="2.4" fill="none" stroke="#7a7a7a" stroke-width="1.2"/><path d="M3.3 4.6h5" stroke="#888" stroke-width="1"/><rect x="3.3" y="6.6" width="5" height="2.6" fill="#999"/><rect x="18" y="0.5" width="13.5" height="13.5" rx="1.5" fill="#fff" stroke="#b8b8b8"/><path d="M20.2 6.6l3.6 3.4 7-7.2" fill="none" stroke="#2b8ad8" stroke-width="1.5"/></svg>
<div class="t" style="left:108px;top:487.2px;font-size:11.5px;color:#333">地下一层动力配电B_ALb1-B_267</div>
<svg class="ab" style="left:44.7px;top:511.8px" width="40" height="15" viewBox="0 0 40 15"><path d="M0 10 L5.6 10 L5.6 3.4Z" fill="#3a3a3a"/><path d="M8 1.2H11.5L12.8 2.5H18.5V5H8Z" fill="#8fc6f3"/><path d="M8 4.2H19.5Q20.8 4.2 20.6 5.4L19.4 9.6Q19.1 10.5 18.2 10.5H8Z" fill="#2b8ee8"/><rect x="22.3" y="0.5" width="13.5" height="13.5" rx="1.5" fill="#fff" stroke="#b8b8b8"/><path d="M24.5 6.6l3.6 3.4 7-7.2" fill="none" stroke="#2b8ad8" stroke-width="1.5"/></svg>
<div class="t" style="left:87.5px;top:512.6px;font-size:11.5px;color:#333">B1层空调风机房</div>
<svg class="ab" style="left:70.0px;top:536.2px" width="34" height="15" viewBox="0 0 34 15"><rect x="0.6" y="1.6" width="10.5" height="11.5" rx="2.4" fill="none" stroke="#7a7a7a" stroke-width="1.2"/><path d="M3.3 4.6h5" stroke="#888" stroke-width="1"/><rect x="3.3" y="6.6" width="5" height="2.6" fill="#999"/><rect x="18" y="0.5" width="13.5" height="13.5" rx="1.5" fill="#fff" stroke="#b8b8b8"/><path d="M20.2 6.6l3.6 3.4 7-7.2" fill="none" stroke="#2b8ad8" stroke-width="1.5"/></svg>
<div class="t" style="left:108px;top:538.0px;font-size:11.5px;color:#333">地下一层风机_ACb1_252</div>
<svg class="ab" style="left:70.0px;top:561.5px" width="34" height="15" viewBox="0 0 34 15"><rect x="0.6" y="1.6" width="10.5" height="11.5" rx="2.4" fill="none" stroke="#7a7a7a" stroke-width="1.2"/><path d="M3.3 4.6h5" stroke="#888" stroke-width="1"/><rect x="3.3" y="6.6" width="5" height="2.6" fill="#999"/><rect x="18" y="0.5" width="13.5" height="13.5" rx="1.5" fill="#fff" stroke="#b8b8b8"/><path d="M20.2 6.6l3.6 3.4 7-7.2" fill="none" stroke="#2b8ad8" stroke-width="1.5"/></svg>
<div class="t" style="left:108px;top:563.3px;font-size:11.5px;color:#333">地下一层照明配电C_ALEb1-C_269</div>
</div>
<div class="ab" style="left:614px;top:306px;width:5px;height:566px;background:#e6e6e6"></div>
<div class="ab" style="left:614px;top:306px;width:5px;height:49px;background:#a8a8a8"></div>
<div class="ab" style="left:335px;top:872px;width:284px;height:5px;background:#e6e6e6"></div>
<div class="ab" style="left:335px;top:872px;width:216px;height:5px;background:#a8a8a8"></div>
<div class="ab" style="left:635px;top:171px;width:1201px;height:762px;border-left:1px solid #eee;border-top:1px solid #f0f0f0"></div>
<div class="ab" style="left:635px;top:244px;width:1201px;height:1px;background:#eee"></div>
<div class="t" style="left:662px;top:202.5px;font-size:12px;color:#333;letter-spacing:.7px">数据类型:</div>
<div class="ab" style="left:725px;top:191.5px;width:137px;height:33px;border:1px solid #d5d5d5;border-radius:4px"></div>
<div class="t" style="left:734px;top:203px;font-size:12px;color:#333">日数据</div>
<svg class="ab" style="left:847.5px;top:205.5px" width="9" height="6" viewBox="0 0 9 6"><path d="M0.5 0h8L4.5 5z" fill="#555"/></svg>
<div class="t" style="left:899px;top:202.5px;font-size:12px;color:#333;letter-spacing:.7px">开始时间:</div>
<div class="ab" style="left:961px;top:191.5px;width:138px;height:33px;border:1px solid #d5d5d5;border-radius:4px"></div>
<div class="t" style="left:970px;top:202.5px;font-size:12.5px;color:#333">2022-09-01</div>
<div class="t" style="left:1134px;top:202.5px;font-size:12px;color:#333;letter-spacing:.7px">结束时间:</div>
<div class="ab" style="left:1197px;top:191.5px;width:138px;height:33px;border:1px solid #d5d5d5;border-radius:4px"></div>
<div class="t" style="left:1206px;top:202.5px;font-size:12.5px;color:#333">2022-09-01</div>
<svg class="ab" style="left:1080px;top:200px" width="15" height="16" viewBox="0 0 15 16" fill="none" stroke="#999"><rect x="0.5" y="2.5" width="14" height="13" rx="1"/><rect x="0.5" y="2.5" width="14" height="3" fill="#aaa"/><path d="M4 1v3M11 1v3M4 8v6M7.5 8v6M11 8v6" /></svg>
<svg class="ab" style="left:1316px;top:200px" width="15" height="16" viewBox="0 0 15 16" fill="none" stroke="#999"><rect x="0.5" y="2.5" width="14" height="13" rx="1"/><rect x="0.5" y="2.5" width="14" height="3" fill="#aaa"/><path d="M4 1v3M11 1v3M4 8v6M7.5 8v6M11 8v6" /></svg>
<div class="ab" style="left:1606.5px;top:191.5px;width:66px;height:33px;background:#2499f1;border-radius:4px"></div>
<svg class="ab" style="left:1616px;top:202px" width="14" height="15" viewBox="0 0 14 15" fill="none" stroke="#fff" stroke-width="1.2"><circle cx="6" cy="6.2" r="5"/><path d="M9.6 10l3 3.5"/></svg>
<div class="t" style="left:1632px;top:202.5px;font-size:11.5px;color:#fff;letter-spacing:7px">查询</div>
<div class="ab" style="left:1682.5px;top:191.5px;width:65.5px;height:33px;border:1px solid #cfcfcf;border-radius:4px"></div>
<svg class="ab" style="left:1689px;top:201px" width="20" height="16" viewBox="0 0 20 16" fill="none" stroke="#555" stroke-width="1.1"><path d="M9.5 5V1.5H1.5V14.5H12.5V11"/><path d="M4.5 5.5L8 10.5M8 5.5L4.5 10.5"/><path d="M10 9Q10.5 5.5 15 5.5" /><path d="M14.5 3L18 5.5L14.5 8Z" fill="#555" stroke="none"/></svg>
<div class="t" style="left:1711.5px;top:202.5px;font-size:11px;color:#333;letter-spacing:7px">导出</div>
<div class="ab" style="left:1757.5px;top:191.5px;width:66px;height:33px;border:1px solid #cfcfcf;border-radius:4px"></div>
<svg class="ab" style="left:1762px;top:200.5px" width="11" height="15" viewBox="0 0 11 15" fill="none" stroke="#555" stroke-width="1.1"><rect x="0.8" y="0.8" width="9.4" height="13.4" rx=".8"/><path d="M3 4h5M3 6.5h5M3 9h3.5"/></svg>
<div class="t" style="left:1778px;top:203px;font-size:10.5px;color:#333">固化报表</div>
<div class="ab" style="left:636px;top:260px;width:1200px;height:39.5px;background:#e4e4e4"></div>
<svg class="ab" style="left:645px;top:272px" width="14" height="16" viewBox="0 0 14 16"><rect x="0" y="0" width="14" height="16" fill="#555"/><rect x="3" y="3.5" width="4.5" height="2.8" fill="#fff"/><rect x="8.3" y="3.5" width="4.5" height="2.8" fill="#fff"/><rect x="3" y="7.5" width="4.5" height="2.8" fill="#fff"/><rect x="8.3" y="7.5" width="4.5" height="2.8" fill="#fff"/><rect x="3" y="11.5" width="4.5" height="2.8" fill="#fff"/><rect x="8.3" y="11.5" width="4.5" height="2.8" fill="#fff"/></svg>
<div class="t" style="left:662.5px;top:274px;font-size:13.4px;color:#333">统计报表</div>
<div class="ab" style="left:1726px;top:263.5px;width:67px;height:33px;background:#2499f1;border-radius:4px"></div>
<svg class="ab" style="left:1736px;top:273px" width="16" height="16" viewBox="0 0 16 16" fill="none" stroke="#fff" stroke-width="1.3"><path d="M1 1.5V14.5H12V8"/><path d="M3.5 6L7 10.5L14.5 1.5"/></svg>
<div class="t" style="left:1755px;top:275px;font-size:11px;color:#fff;letter-spacing:7px;font-weight:bold">保存</div>
<div class="ab" style="left:1805px;top:273px;width:14px;height:14px;border-radius:50%;background:#555"></div>
<div class="t" style="left:1808.5px;top:275px;font-size:11px;font-weight:bold;color:#fff">?</div>
<div class="t" style="left:1131px;top:322px;font-size:16px;color:#333">襄阳科技馆重点工区统计报表</div>
<div class="ab" style="left:649px;top:359px;width:1174px;height:38px;background:#2499f1"></div>
<div class="ab" style="left:649px;top:370px;width:36px;text-align:center;font-size:13.5px;line-height:17px;color:#fff;font-weight:500;letter-spacing:1.5px">序号</div>
<div class="ab" style="left:685px;top:370px;width:202px;text-align:center;font-size:13.5px;line-height:17px;color:#fff;font-weight:500;letter-spacing:1.5px">对象名称</div>
<div class="ab" style="left:685px;top:359px;width:1px;height:38px;background:#5db3f5"></div>
<div class="ab" style="left:887px;top:361.5px;width:143px;text-align:center;font-size:13.5px;line-height:17px;color:#fff;font-weight:500;letter-spacing:1.5px">起码<br>(09-01 00:00)</div>
<div class="ab" style="left:887px;top:359px;width:1px;height:38px;background:#5db3f5"></div>
<div class="ab" style="left:1030px;top:361.5px;width:143px;text-align:center;font-size:13.5px;line-height:17px;color:#fff;font-weight:500;letter-spacing:1.5px">止码<br>(09-02 00:00)</div>
<div class="ab" style="left:1030px;top:359px;width:1px;height:38px;background:#5db3f5"></div>
<div class="ab" style="left:1173px;top:370px;width:163px;text-align:center;font-size:13.5px;line-height:17px;color:#fff;font-weight:500;letter-spacing:1.5px">用能量(kWh)</div>
<div class="ab" style="left:1173px;top:359px;width:1px;height:38px;background:#5db3f5"></div>
<div class="ab" style="left:1336px;top:370px;width:162px;text-align:center;font-size:13.5px;line-height:17px;color:#fff;font-weight:500;letter-spacing:1.5px">用能成本(元)</div>
<div class="ab" style="left:1336px;top:359px;width:1px;height:38px;background:#5db3f5"></div>
<div class="ab" style="left:1498px;top:370px;width:162px;text-align:center;font-size:13.5px;line-height:17px;color:#fff;font-weight:500;letter-spacing:1.5px">综合能耗(tce)</div>
<div class="ab" style="left:1498px;top:359px;width:1px;height:38px;background:#5db3f5"></div>
<div class="ab" style="left:1660px;top:370px;width:163px;text-align:center;font-size:13.5px;line-height:17px;color:#fff;font-weight:500;letter-spacing:1.5px">碳排放(tCO₂)</div>
<div class="ab" style="left:1660px;top:359px;width:1px;height:38px;background:#5db3f5"></div>
<div class="ab" style="left:649px;top:397.4px;width:1174px;height:29.6px;background:linear-gradient(#fdfdfd,#f1f1f1);border-bottom:1px solid #ddd"></div>
<div class="t" style="left:649px;top:408.4px;width:36px;text-align:center;font-size:11px;color:#333">1</div>
<div class="t" style="left:694px;top:409.4px;font-size:11px;color:#333">负一层</div>
<div class="t" style="left:887px;top:408.4px;width:143px;text-align:center;font-size:11px;color:#333">9,856.13</div>
<div class="t" style="left:1030px;top:408.4px;width:143px;text-align:center;font-size:11px;color:#333">9,947.65</div>
<div class="t" style="left:1173px;top:408.4px;width:163px;text-align:center;font-size:11px;color:#333">91.52</div>
<div class="t" style="left:1336px;top:408.4px;width:162px;text-align:center;font-size:11px;color:#333">91.52</div>
<div class="t" style="left:1498px;top:408.4px;width:162px;text-align:center;font-size:11px;color:#333">0.01</div>
<div class="t" style="left:1660px;top:408.4px;width:163px;text-align:center;font-size:11px;color:#333">0.05</div>
<div class="ab" style="left:649px;top:427.0px;width:1174px;height:29.6px;background:#fff;border-bottom:1px solid #ddd"></div>
<div class="t" style="left:649px;top:438.0px;width:36px;text-align:center;font-size:11px;color:#333">2</div>
<div class="t" style="left:694px;top:439.0px;font-size:11px;color:#333">餐厅</div>
<div class="t" style="left:887px;top:438.0px;width:143px;text-align:center;font-size:11px;color:#333">8,836.18</div>
<div class="t" style="left:1030px;top:438.0px;width:143px;text-align:center;font-size:11px;color:#333">8,916.98</div>
<div class="t" style="left:1173px;top:438.0px;width:163px;text-align:center;font-size:11px;color:#333">80.80</div>
<div class="t" style="left:1336px;top:438.0px;width:162px;text-align:center;font-size:11px;color:#333">80.80</div>
<div class="t" style="left:1498px;top:438.0px;width:162px;text-align:center;font-size:11px;color:#333">0.01</div>
<div class="t" style="left:1660px;top:438.0px;width:163px;text-align:center;font-size:11px;color:#333">0.05</div>
<div class="ab" style="left:649px;top:456.6px;width:1174px;height:29.6px;background:linear-gradient(#fdfdfd,#f1f1f1);border-bottom:1px solid #ddd"></div>
<div class="t" style="left:649px;top:467.6px;width:36px;text-align:center;font-size:11px;color:#333">3</div>
<div class="t" style="left:694px;top:468.6px;font-size:11px;color:#333">B1层厨房(APb1-CF)_313_77</div>
<div class="t" style="left:887px;top:467.6px;width:143px;text-align:center;font-size:11px;color:#333">7,592.62</div>
<div class="t" style="left:1030px;top:467.6px;width:143px;text-align:center;font-size:11px;color:#333">7,673.42</div>
<div class="t" style="left:1173px;top:467.6px;width:163px;text-align:center;font-size:11px;color:#333">80.80</div>
<div class="t" style="left:1336px;top:467.6px;width:162px;text-align:center;font-size:11px;color:#333">80.80</div>
<div class="t" style="left:1498px;top:467.6px;width:162px;text-align:center;font-size:11px;color:#333">0.01</div>
<div class="t" style="left:1660px;top:467.6px;width:163px;text-align:center;font-size:11px;color:#333">0.05</div>
<div class="ab" style="left:649px;top:486.2px;width:1174px;height:29.6px;background:#fff;border-bottom:1px solid #ddd"></div>
<div class="t" style="left:649px;top:497.2px;width:36px;text-align:center;font-size:11px;color:#333">4</div>
<div class="t" style="left:694px;top:498.2px;font-size:11px;color:#333">餐厅照明</div>
<div class="t" style="left:887px;top:497.2px;width:143px;text-align:center;font-size:11px;color:#333">970.90</div>
<div class="t" style="left:1030px;top:497.2px;width:143px;text-align:center;font-size:11px;color:#333">974.30</div>
<div class="t" style="left:1173px;top:497.2px;width:163px;text-align:center;font-size:11px;color:#333">3.40</div>
<div class="t" style="left:1336px;top:497.2px;width:162px;text-align:center;font-size:11px;color:#333">3.40</div>
<div class="t" style="left:1498px;top:497.2px;width:162px;text-align:center;font-size:11px;color:#333">0.00</div>
<div class="t" style="left:1660px;top:497.2px;width:163px;text-align:center;font-size:11px;color:#333">0.00</div>
<div class="ab" style="left:649px;top:515.8px;width:1174px;height:29.6px;background:linear-gradient(#fdfdfd,#f1f1f1);border-bottom:1px solid #ddd"></div>
<div class="t" style="left:649px;top:526.8px;width:36px;text-align:center;font-size:11px;color:#333">5</div>
<div class="t" style="left:694px;top:527.8px;font-size:11px;color:#333">地下一层动力配电D_ALb1-D_242</div>
<div class="t" style="left:887px;top:526.8px;width:143px;text-align:center;font-size:11px;color:#333">7,598.30</div>
<div class="t" style="left:1030px;top:526.8px;width:143px;text-align:center;font-size:11px;color:#333">7,613.00</div>
<div class="t" style="left:1173px;top:526.8px;width:163px;text-align:center;font-size:11px;color:#333">14.70</div>
<div class="t" style="left:1336px;top:526.8px;width:162px;text-align:center;font-size:11px;color:#333">14.70</div>
<div class="t" style="left:1498px;top:526.8px;width:162px;text-align:center;font-size:11px;color:#333">0.00</div>
<div class="t" style="left:1660px;top:526.8px;width:163px;text-align:center;font-size:11px;color:#333">0.01</div>
<div class="ab" style="left:685px;top:397px;width:1px;height:148px;background:#ddd"></div>
<div class="ab" style="left:887px;top:397px;width:1px;height:148px;background:#ddd"></div>
<div class="ab" style="left:1030px;top:397px;width:1px;height:148px;background:#ddd"></div>
<div class="ab" style="left:1173px;top:397px;width:1px;height:148px;background:#ddd"></div>
<div class="ab" style="left:1336px;top:397px;width:1px;height:148px;background:#ddd"></div>
<div class="ab" style="left:1498px;top:397px;width:1px;height:148px;background:#ddd"></div>
<div class="ab" style="left:1660px;top:397px;width:1px;height:148px;background:#ddd"></div>
<div class="ab" style="left:649px;top:397px;width:1px;height:148px;background:#ddd"></div>
<div class="ab" style="left:1823px;top:397px;width:1px;height:148px;background:#ddd"></div>
<div class="ab" style="left:649px;top:545px;width:1176px;height:40px;background:linear-gradient(#f6f6f6,#eeeeee)"></div>
<div class="t" style="left:662px;top:561px;font-size:11px;color:#333">共 260 条记录</div>
<svg class="ab" style="left:1577px;top:553px" width="23" height="25" viewBox="0 0 23 25"><rect x="0.5" y="0.5" width="22" height="24" fill="#f3f3f3" stroke="#d5d5d5"/><path d="M14 7V18L8 12.5Z" fill="#333"/></svg>
<svg class="ab" style="left:1605px;top:553px" width="23" height="25" viewBox="0 0 23 25"><rect x="0.5" y="0.5" width="22" height="24" fill="#f3f3f3" stroke="#d5d5d5"/><path d="M13.5 7.5L9 12.5L13.5 17.5" fill="none" stroke="#333" stroke-width="1.4"/></svg>
<svg class="ab" style="left:1741px;top:553px" width="23" height="25" viewBox="0 0 23 25"><rect x="0.5" y="0.5" width="22" height="24" fill="#f3f3f3" stroke="#d5d5d5"/><path d="M9.5 7.5L14 12.5L9.5 17.5" fill="none" stroke="#333" stroke-width="1.4"/></svg>
<svg class="ab" style="left:1769px;top:553px" width="23" height="25" viewBox="0 0 23 25"><rect x="0.5" y="0.5" width="22" height="24" fill="#f3f3f3" stroke="#d5d5d5"/><path d="M9 7V18L15 12.5Z" fill="#333"/></svg>
<svg class="ab" style="left:1796px;top:553px" width="23" height="25" viewBox="0 0 23 25"><rect x="0.5" y="0.5" width="22" height="24" fill="#f3f3f3" stroke="#d5d5d5"/><path d="M15.8 9.5A5.2 5.2 0 1 0 16.5 13" fill="none" stroke="#333" stroke-width="1.3"/><path d="M14 7.5L17 6.5L16.8 10Z" fill="#333"/></svg>
<div class="ab" style="left:1650px;top:553px;width:28px;height:25px;border:1px solid #d0d0d0;background:#fff"></div>
<div class="t" style="left:1635px;top:561px;font-size:11px;color:#555">第</div>
<div class="t" style="left:1660px;top:560px;font-size:12px;color:#333">1</div>
<div class="t" style="left:1685px;top:561px;font-size:11px;color:#555">共</div>
<div class="t" style="left:1705px;top:561px;font-size:11px;color:#555">52</div>
<div class="t" style="left:1725px;top:561px;font-size:11px;color:#555">页</div>
<div class="ab" style="left:650px;top:610px;width:1174px;height:37px;background:#e8f3fd"></div>
<svg class="ab" style="left:658px;top:619px" width="15" height="19" viewBox="0 0 15 19"><path d="M7.5 0.5Q3 0.5 3 6V9Q0.5 10.5 0.5 13.5V15H14.5V13.5Q14.5 10.5 12 9V6Q12 0.5 7.5 0.5Z" fill="#2a95ee"/><path d="M5.5 16.5H9.5Q9 18.5 7.5 18.5Q6 18.5 5.5 16.5Z" fill="#6bb8f5"/><path d="M8.5 2.5Q10 3 10.5 4.5" stroke="#9fd2fa" stroke-width="1" fill="none"/></svg>
<div class="t" style="left:683px;top:622.5px;font-size:12.5px;color:#3a8ee6">注:</div>
<div class="t" style="left:705px;top:622.5px;font-size:12.5px;color:#3a8ee6">"</div>
<div class="t" style="left:710px;top:622.5px;font-size:12.5px;color:#3a8ee6"><span style="letter-spacing:1.3px">###</span></div>
<div class="t" style="left:736px;top:622.5px;font-size:12.5px;color:#3a8ee6">"</div>
<div class="t" style="left:740px;top:622.5px;font-size:12.5px;color:#3a8ee6">表示采集数据异常</div>
<div class="t" style="left:838.5px;top:622.5px;font-size:12.5px;color:#3a8ee6">，</div>
<div class="t" style="left:851px;top:622.5px;font-size:12.5px;color:#3a8ee6">"</div>
<div class="t" style="left:856px;top:622.5px;font-size:12.5px;color:#3a8ee6">/</div>
<div class="t" style="left:862px;top:622.5px;font-size:12.5px;color:#3a8ee6">"</div>
<div class="t" style="left:868px;top:622.5px;font-size:12.5px;color:#3a8ee6">表示无意义。</div>
<div class="ab" style="left:636px;top:657px;width:1200px;height:1px;background:#eee"></div>
<div class="ab" style="left:636px;top:672px;width:1200px;height:40px;background:#e4e4e4"></div>
<svg class="ab" style="left:645px;top:686.5px" width="14" height="14" viewBox="0 0 14 14" fill="none" stroke="#555"><path d="M0.8 0V13.2H14" stroke-width="1.3"/><path d="M3.3 8V12M6.3 6V12M9.3 8V12M12.3 5V12" stroke-width="1"/></svg>
<div class="t" style="left:662.5px;top:686.5px;font-size:13.2px;color:#333">统计分析</div>
<div class="t" style="left:1164px;top:734px;font-size:16px;color:#333">用电量日起止码分析</div>
<div class="t" style="left:687px;top:770.5px;font-size:11px;color:#888">正向有功电能(kWh)</div>
<div class="ab" style="left:688px;top:825px;width:1140px;height:1px;background:#e6e6e6"></div>
<div class="ab" style="left:688px;top:790px;width:1px;height:99px;background:#ccc"></div>
<div class="ab" style="left:688px;top:888px;width:1140px;height:1px;background:#ccd6eb"></div>
<div class="t" style="left:657px;top:820.5px;font-size:11px;color:#666">500</div>
<div class="t" style="left:670px;top:883.5px;font-size:11px;color:#666">0</div>
<div class="ab" style="left:708.8px;top:796px;width:36.5px;height:92.0px;background:#7cb5ec"></div>
<div class="t" style="left:686.8px;top:898px;width:80px;text-align:center;font-size:10px;color:#555">二层</div>
<div class="ab" style="left:784.8px;top:847.5px;width:36.5px;height:40.5px;background:#7cb5ec"></div>
<div class="t" style="left:762.8px;top:898px;width:80px;text-align:center;font-size:10px;color:#555">B1层空调风机房</div>
<div class="ab" style="left:860.8px;top:847.5px;width:36.5px;height:40.5px;background:#7cb5ec"></div>
<div class="t" style="left:838.8px;top:898px;width:80px;text-align:center;font-size:10px;color:#555">地下一层风机_...</div>
<div class="ab" style="left:936.8px;top:854.7px;width:36.5px;height:33.3px;background:#7cb5ec"></div>
<div class="t" style="left:914.8px;top:898px;width:80px;text-align:center;font-size:10px;color:#555">一层</div>
<div class="ab" style="left:1012.8px;top:854.7px;width:36.5px;height:33.3px;background:#7cb5ec"></div>
<div class="t" style="left:990.8px;top:898px;width:80px;text-align:center;font-size:10px;color:#555">地球家园</div>
<div class="ab" style="left:1088.8px;top:862.2px;width:36.5px;height:25.8px;background:#7cb5ec"></div>
<div class="t" style="left:1066.8px;top:898px;width:80px;text-align:center;font-size:10px;color:#555">其他1</div>
<div class="ab" style="left:1164.8px;top:868.3px;width:36.5px;height:19.7px;background:#7cb5ec"></div>
<div class="t" style="left:1142.8px;top:898px;width:80px;text-align:center;font-size:10px;color:#555">公共安全</div>
<div class="ab" style="left:1240.8px;top:869px;width:36.5px;height:19.0px;background:#7cb5ec"></div>
<div class="t" style="left:1218.8px;top:898px;width:80px;text-align:center;font-size:10px;color:#555">备用_310_59</div>
<div class="ab" style="left:1316.8px;top:870px;width:36.5px;height:18.0px;background:#7cb5ec"></div>
<div class="t" style="left:1294.8px;top:898px;width:80px;text-align:center;font-size:10px;color:#555">创新前沿</div>
<div class="ab" style="left:1392.8px;top:870px;width:36.5px;height:18.0px;background:#7cb5ec"></div>
<div class="t" style="left:1370.8px;top:898px;width:80px;text-align:center;font-size:10px;color:#555">创新前沿展厅_...</div>
<div class="ab" style="left:1468.8px;top:870px;width:36.5px;height:18.0px;background:#7cb5ec"></div>
<div class="t" style="left:1446.8px;top:898px;width:80px;text-align:center;font-size:10px;color:#555">公共安全展厅_...</div>
<div class="ab" style="left:1544.8px;top:870px;width:36.5px;height:18.0px;background:#7cb5ec"></div>
<div class="t" style="left:1522.8px;top:898px;width:80px;text-align:center;font-size:10px;color:#555">B1-2层照明_4...</div>
<div class="ab" style="left:1620.8px;top:872px;width:36.5px;height:16.0px;background:#7cb5ec"></div>
<div class="t" style="left:1598.8px;top:898px;width:80px;text-align:center;font-size:10px;color:#555">童梦乐园</div>
<div class="ab" style="left:1696.8px;top:872.7px;width:36.5px;height:15.3px;background:#7cb5ec"></div>
<div class="t" style="left:1674.8px;top:898px;width:80px;text-align:center;font-size:10px;color:#555">网络机房预留(...</div>
<div class="ab" style="left:1772.8px;top:873.8px;width:36.5px;height:14.2px;background:#7cb5ec"></div>
<div class="t" style="left:1750.8px;top:898px;width:80px;text-align:center;font-size:10px;color:#555">创新前沿_310...</div>
</body></html>
